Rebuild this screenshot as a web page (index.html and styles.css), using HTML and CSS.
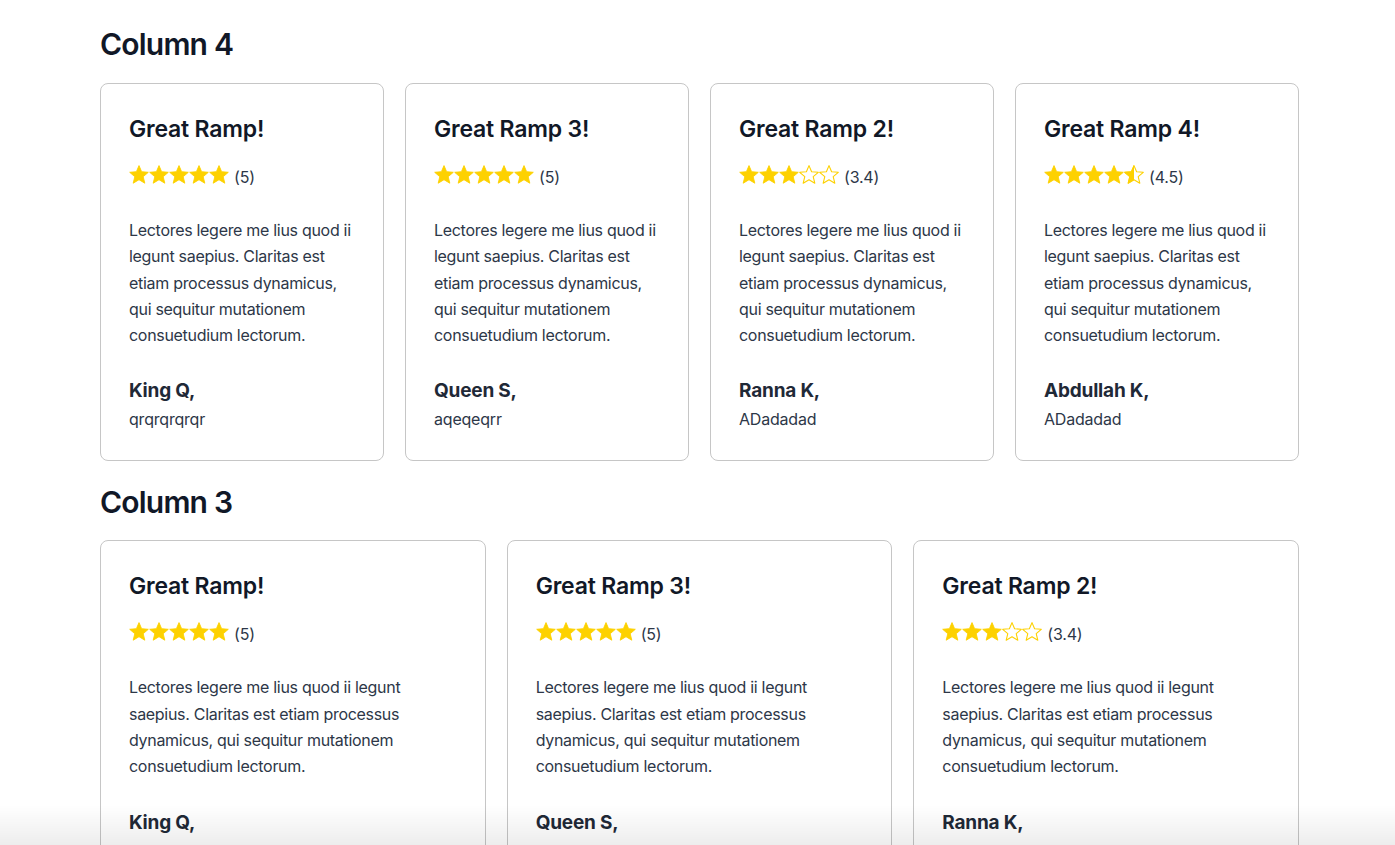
FILE: index.html
```html
<!DOCTYPE html>
<html lang="en">
<head>
<meta charset="utf-8">
<title>Testimonials</title>
<link rel="stylesheet" href="styles.css">
</head>
<body>
<svg width="0" height="0" class="defs" aria-hidden="true">
  <defs>
    <path id="star" d="M10 0.6L12.6 6.7L19.3 7.3L14.2 11.7L15.8 18.2L10 14.7L4.2 18.2L5.8 11.7L0.7 7.3L7.4 6.7Z"/>
    <clipPath id="half"><rect x="0" y="0" width="10" height="20"/></clipPath>
  </defs>
</svg>
<main class="page">
  <section class="group">
    <h2 class="group-title">Column 4</h2>
    <div class="cards cards-4">
      <article class="card">
        <h3 class="card-title">Great Ramp!</h3>
        <div class="rating">
          <span class="stars">
            <svg class="star" viewBox="0 0 20 20"><use href="#star" class="fill"/></svg>
            <svg class="star" viewBox="0 0 20 20"><use href="#star" class="fill"/></svg>
            <svg class="star" viewBox="0 0 20 20"><use href="#star" class="fill"/></svg>
            <svg class="star" viewBox="0 0 20 20"><use href="#star" class="fill"/></svg>
            <svg class="star" viewBox="0 0 20 20"><use href="#star" class="fill"/></svg>
          </span>
          <span class="score">(5)</span>
        </div>
        <p class="text">Lectores legere me lius quod ii legunt saepius. Claritas est etiam processus dynamicus, qui sequitur mutationem consuetudium lectorum.</p>
        <div class="name">King Q,</div>
        <div class="meta">qrqrqrqrqr</div>
      </article>
      <article class="card">
        <h3 class="card-title">Great Ramp 3!</h3>
        <div class="rating">
          <span class="stars">
            <svg class="star" viewBox="0 0 20 20"><use href="#star" class="fill"/></svg>
            <svg class="star" viewBox="0 0 20 20"><use href="#star" class="fill"/></svg>
            <svg class="star" viewBox="0 0 20 20"><use href="#star" class="fill"/></svg>
            <svg class="star" viewBox="0 0 20 20"><use href="#star" class="fill"/></svg>
            <svg class="star" viewBox="0 0 20 20"><use href="#star" class="fill"/></svg>
          </span>
          <span class="score">(5)</span>
        </div>
        <p class="text">Lectores legere me lius quod ii legunt saepius. Claritas est etiam processus dynamicus, qui sequitur mutationem consuetudium lectorum.</p>
        <div class="name">Queen S,</div>
        <div class="meta">aqeqeqrr</div>
      </article>
      <article class="card">
        <h3 class="card-title">Great Ramp 2!</h3>
        <div class="rating">
          <span class="stars">
            <svg class="star" viewBox="0 0 20 20"><use href="#star" class="fill"/></svg>
            <svg class="star" viewBox="0 0 20 20"><use href="#star" class="fill"/></svg>
            <svg class="star" viewBox="0 0 20 20"><use href="#star" class="fill"/></svg>
            <svg class="star" viewBox="0 0 20 20"><use href="#star" class="empty"/></svg>
            <svg class="star" viewBox="0 0 20 20"><use href="#star" class="empty"/></svg>
          </span>
          <span class="score">(3.4)</span>
        </div>
        <p class="text">Lectores legere me lius quod ii legunt saepius. Claritas est etiam processus dynamicus, qui sequitur mutationem consuetudium lectorum.</p>
        <div class="name">Ranna K,</div>
        <div class="meta">ADadadad</div>
      </article>
      <article class="card">
        <h3 class="card-title">Great Ramp 4!</h3>
        <div class="rating">
          <span class="stars">
            <svg class="star" viewBox="0 0 20 20"><use href="#star" class="fill"/></svg>
            <svg class="star" viewBox="0 0 20 20"><use href="#star" class="fill"/></svg>
            <svg class="star" viewBox="0 0 20 20"><use href="#star" class="fill"/></svg>
            <svg class="star" viewBox="0 0 20 20"><use href="#star" class="fill"/></svg>
            <svg class="star" viewBox="0 0 20 20"><use href="#star" class="empty"/><use href="#star" class="fill" clip-path="url(#half)"/></svg>
          </span>
          <span class="score">(4.5)</span>
        </div>
        <p class="text">Lectores legere me lius quod ii legunt saepius. Claritas est etiam processus dynamicus, qui sequitur mutationem consuetudium lectorum.</p>
        <div class="name">Abdullah K,</div>
        <div class="meta">ADadadad</div>
      </article>
    </div>
  </section>

  <section class="group">
    <h2 class="group-title">Column 3</h2>
    <div class="cards cards-3">
      <article class="card">
        <h3 class="card-title">Great Ramp!</h3>
        <div class="rating">
          <span class="stars">
            <svg class="star" viewBox="0 0 20 20"><use href="#star" class="fill"/></svg>
            <svg class="star" viewBox="0 0 20 20"><use href="#star" class="fill"/></svg>
            <svg class="star" viewBox="0 0 20 20"><use href="#star" class="fill"/></svg>
            <svg class="star" viewBox="0 0 20 20"><use href="#star" class="fill"/></svg>
            <svg class="star" viewBox="0 0 20 20"><use href="#star" class="fill"/></svg>
          </span>
          <span class="score">(5)</span>
        </div>
        <p class="text">Lectores legere me lius quod ii legunt saepius. Claritas est etiam processus dynamicus, qui sequitur mutationem consuetudium lectorum.</p>
        <div class="name">King Q,</div>
        <div class="meta">qrqrqrqrqr</div>
      </article>
      <article class="card">
        <h3 class="card-title">Great Ramp 3!</h3>
        <div class="rating">
          <span class="stars">
            <svg class="star" viewBox="0 0 20 20"><use href="#star" class="fill"/></svg>
            <svg class="star" viewBox="0 0 20 20"><use href="#star" class="fill"/></svg>
            <svg class="star" viewBox="0 0 20 20"><use href="#star" class="fill"/></svg>
            <svg class="star" viewBox="0 0 20 20"><use href="#star" class="fill"/></svg>
            <svg class="star" viewBox="0 0 20 20"><use href="#star" class="fill"/></svg>
          </span>
          <span class="score">(5)</span>
        </div>
        <p class="text">Lectores legere me lius quod ii legunt saepius. Claritas est etiam processus dynamicus, qui sequitur mutationem consuetudium lectorum.</p>
        <div class="name">Queen S,</div>
        <div class="meta">aqeqeqrr</div>
      </article>
      <article class="card">
        <h3 class="card-title">Great Ramp 2!</h3>
        <div class="rating">
          <span class="stars">
            <svg class="star" viewBox="0 0 20 20"><use href="#star" class="fill"/></svg>
            <svg class="star" viewBox="0 0 20 20"><use href="#star" class="fill"/></svg>
            <svg class="star" viewBox="0 0 20 20"><use href="#star" class="fill"/></svg>
            <svg class="star" viewBox="0 0 20 20"><use href="#star" class="empty"/></svg>
            <svg class="star" viewBox="0 0 20 20"><use href="#star" class="empty"/></svg>
          </span>
          <span class="score">(3.4)</span>
        </div>
        <p class="text">Lectores legere me lius quod ii legunt saepius. Claritas est etiam processus dynamicus, qui sequitur mutationem consuetudium lectorum.</p>
        <div class="name">Ranna K,</div>
        <div class="meta">ADadadad</div>
      </article>
    </div>
  </section>
</main>
<div class="fade"></div>
</body>
</html>
```

FILE: styles.css
```css
* { box-sizing: border-box; }

html, body {
  margin: 0;
  padding: 0;
  background: #ffffff;
}

body {
  font-family: Inter, "Noto Sans", "Liberation Sans", sans-serif;
  color: #1f2937;
}

.defs {
  position: absolute;
  width: 0;
  height: 0;
  overflow: hidden;
}

.page {
  width: 1199px;
  margin: 0 0 0 100px;
  padding-top: 26px;
}

.group-title {
  margin: 0 0 21px;
  font-size: 30px;
  font-weight: 600;
  line-height: 36px;
  color: #111827;
  letter-spacing: -0.8px;
}

.group + .group .group-title {
  margin-top: 23px;
  margin-bottom: 20px;
}

.cards {
  display: grid;
  gap: 21px;
}

.cards-4 { grid-template-columns: repeat(4, 1fr); }
.cards-3 { grid-template-columns: repeat(3, 1fr); }

.card {
  border: 1px solid #c6c6c6;
  border-radius: 8px;
  padding: 32px 28px 31px;
  background: #fff;
}

.card-title {
  margin: 0;
  font-size: 23px;
  font-weight: 600;
  line-height: 27px;
  color: #111827;
  letter-spacing: -0.2px;
}

.rating {
  display: flex;
  align-items: center;
  margin-top: 22px;
  height: 20px;
}

.stars {
  display: flex;
  gap: 0;
}

.star {
  width: 20px;
  height: 20px;
  display: block;
}

.star .fill {
  fill: #fdd100;
  stroke: #fdd100;
  stroke-width: 0.9;
  stroke-linejoin: round;
}

.star .empty {
  fill: none;
  stroke: #fdd100;
  stroke-width: 1.1;
  stroke-linejoin: round;
}

.score {
  margin-left: 5px;
  font-size: 16px;
  color: #2d3748;
  position: relative;
  top: 2px;
  letter-spacing: -0.2px;
}

.text {
  margin: 32px 0 0;
  font-size: 16px;
  line-height: 26.3px;
  color: #2d3748;
  letter-spacing: -0.3px;
}

.name {
  margin-top: 31px;
  font-size: 19px;
  font-weight: 700;
  line-height: 24px;
  color: #1f2937;
  letter-spacing: -0.2px;
}

.meta {
  margin-top: 6px;
  font-size: 16px;
  line-height: 20px;
  color: #2d3748;
  letter-spacing: -0.2px;
}

.fade {
  position: fixed;
  left: 0;
  right: 0;
  bottom: 0;
  height: 40px;
  background: linear-gradient(to bottom, rgba(0,0,0,0), rgba(0,0,0,0.07));
  pointer-events: none;
}
```
